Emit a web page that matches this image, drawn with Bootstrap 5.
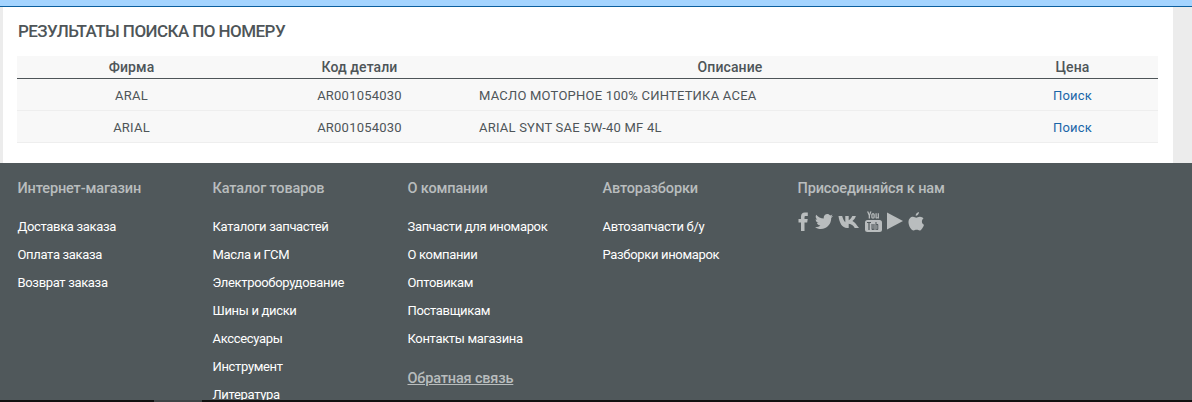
<!DOCTYPE html>
<html lang="ru"><head><meta charset="utf-8">
<link href="https://cdn.jsdelivr.net/npm/bootstrap@5.3.0/dist/css/bootstrap.min.css" rel="stylesheet">
<style>
html,body{height:402px;overflow:hidden}
body{background:#ececec;font-family:"Roboto","Liberation Sans",sans-serif;color:#4e5558;font-size:13px}
.topstrip{height:7px;background:#a4d4ff;border-bottom:1px solid #0b5f9f}
.mainpane{height:156px;margin:0 19px 0 3px;background:#fff;padding:14px 15px 0 14px}
.pagehead{font-size:17px;line-height:20px;font-weight:500;margin:0 0 15px 1px;letter-spacing:-.56px;color:#4e5558}
.restable{width:1141px;table-layout:fixed;margin:0}
.restable th,.restable td{padding:0;text-align:center;vertical-align:middle;background:#f8f8f8;box-shadow:none;color:#4e5558}
.restable th{height:22px;font-size:14px;font-weight:500;border-bottom:1px solid #4e5558;line-height:20px;padding-top:1px;letter-spacing:.1px}
.restable td{height:32px;font-size:13px;border-bottom:1px solid #eeeeee;letter-spacing:.22px;padding-top:4px}
.restable td.desc{text-align:left;padding-left:6px}
.restable a{color:#1a66a8;text-decoration:none}
.sitefoot{background:#50585b;height:239px;padding:17px 0 0 17.5px;overflow:hidden;position:relative}
.footcols{display:flex}
.footcol{width:195px;flex:none}
.foothead{font-size:14.5px;font-weight:500;line-height:18px;color:#b9bdbe;margin-bottom:20px;letter-spacing:-.14px}
.footcol ul{list-style:none;margin:0;padding:0}
.footcol li{height:28px;line-height:18px;font-size:13px;color:#fff;letter-spacing:-.33px}
.feedback{display:block;margin-top:12px;font-size:14.5px;font-weight:500;color:#b9bdbe;text-decoration:underline;line-height:18px;letter-spacing:-.16px}
.socials{display:flex;align-items:center;gap:5px;margin-top:-9px;height:24px}
.socials svg{display:block;fill:#b9bdbe;flex:none}
.socials .icon-f{margin-right:2px;margin-left:.5px}
.bottomline{position:absolute;left:0;right:0;bottom:0;height:2px;background:#111}
.bottomline::after{content:"";position:absolute;left:154px;width:48px;top:0;bottom:0;background:#3f4547}
</style></head><body>
<div class="topstrip"></div>
<div class="mainpane">
<h1 class="pagehead">РЕЗУЛЬТАТЫ ПОИСКА ПО НОМЕРУ</h1>
<table class="table restable">
<colgroup><col style="width:229px"><col style="width:227px"><col style="width:514px"><col style="width:171px"></colgroup>
<thead><tr><th>Фирма</th><th>Код детали</th><th>Описание</th><th>Цена</th></tr></thead>
<tbody>
<tr><td>ARAL</td><td>AR001054030</td><td class="desc">МАСЛО МОТОРНОЕ 100% СИНТЕТИКА ACEA</td><td><a href="#">Поиск</a></td></tr>
<tr><td>ARIAL</td><td>AR001054030</td><td class="desc">ARIAL SYNT SAE 5W-40 MF 4L</td><td><a href="#">Поиск</a></td></tr>
</tbody></table>
</div>
<footer class="sitefoot">
<div class="footcols">
<div class="footcol"><div class="foothead">Интернет-магазин</div><ul><li>Доставка заказа</li><li>Оплата заказа</li><li>Возврат заказа</li></ul></div>
<div class="footcol"><div class="foothead">Каталог товаров</div><ul><li>Каталоги запчастей</li><li>Масла и ГСМ</li><li>Электрооборудование</li><li>Шины и диски</li><li>Акссесуары</li><li>Инструмент</li><li>Литература</li></ul></div>
<div class="footcol"><div class="foothead">О компании</div><ul><li>Запчасти для иномарок</li><li>О компании</li><li>Оптовикам</li><li>Поставщикам</li><li>Контакты магазина</li></ul><a class="feedback" href="#">Обратная связь</a></div>
<div class="footcol"><div class="foothead">Авторазборки</div><ul><li>Автозапчасти б/у</li><li>Разборки иномарок</li></ul></div>
<div class="footcol"><div class="foothead">Присоединяйся к нам</div>
<div class="socials">
<svg class="icon-f" width="10" height="19" viewBox="0 0 10 19"><path d="M3 19V10.500H.5V7H3V4.500C3 1.700 4.600 .5 6.800 .5H9.800V4H7.800C6.900 4 6.500 4.400 6.500 5.200V7H9.700L9.200 10.500H6.500V19Z"/></svg>
<svg width="18" height="15" viewBox="0 0 18 15"><path d="M18 2c-.7.300-1.400.500-2.100.6.800-.5 1.300-1.200 1.600-2-.7.400-1.500.7-2.300.9C14.500.6 13.500 0 12.400 0c-2 0-3.700 1.700-3.700 3.700 0 .3 0 .6.100.9C5.700 4.400 3 2.900 1.200.7.900 1.300.700 1.900.700 2.600c0 1.300.7 2.400 1.600 3.100-.6 0-1.200-.2-1.700-.5 0 1.800 1.300 3.300 3 3.700-.6.200-1.200.2-1.700.1.500 1.500 1.800 2.500 3.500 2.600C4 12.700 2 13.400 0 13.200 1.700 14.300 3.600 15 5.700 15c6.800 0 10.500-5.600 10.500-10.500V4C16.900 3.500 17.500 2.800 18 2Z"/></svg>
<svg width="22" height="13" viewBox="0 0 21 13"><path d="M0 1H3.700C4.300 3.500 5.300 5.800 6.800 7.300V1H10.200V5.200C11.700 4.600 13 2.800 13.800 1H17.400C16.800 3.300 15.300 5 13.900 6C15.500 6.900 17.300 8.500 18.500 10.500L20.500 13H16.200C15.300 10.800 13.200 9.300 10.200 8.800V13H8.500C3.800 13 .8 8 0 1Z"/></svg>
<svg width="17" height="21" viewBox="0 0 17 21"><rect x="0" y="9" width="17" height="12" rx="2.500"/><path d="M2 .5H3.500L4.300 3.300L5.100.5H6.500L5 4.600V7.500H3.700V4.600ZM8 2.200C9.200 2.200 9.700 2.800 9.700 3.800V6C9.700 7 9.200 7.600 8 7.600S6.300 7 6.300 6V3.800C6.300 2.800 6.800 2.200 8 2.200ZM7.500 3.700V6.100C7.500 6.800 8.500 6.800 8.500 6.100V3.700C8.500 3 7.500 3 7.500 3.700ZM10.500 2.300H11.700V6.200C11.700 6.600 12.500 6.500 12.700 6V2.300H13.900V7.500H12.700V7C12 7.800 10.500 7.800 10.500 6.500Z"/><path style="fill:#50585b" d="M2 11H6V12H4.600V19H3.400V12H2ZM6.500 13H7.600V17.500C7.800 18 8.300 18 8.400 17.500V13H9.500V19H8.400V18.400C7.800 19.200 6.500 19.200 6.500 18ZM10.500 11H11.500V13.400C12.200 12.700 13.300 13 13.300 14V18C13.300 19.100 12.200 19.400 11.500 18.500V19H10.500ZM11.500 14.200V18C11.900 18.300 12.300 18.200 12.300 17.800V14.400C12.300 14 11.900 13.900 11.500 14.200Z"/></svg>
<svg width="16" height="18" viewBox="0 0 16 17"><path d="M0 0L16 8.500L0 17Z"/></svg>
<svg width="16" height="19" viewBox="0 0 16 19"><path d="M11 0C11.100 1.900 9.500 3.800 7.700 3.700C7.500 1.900 9.200.2 11 0ZM15.500 6.400C13.200 7.800 13.500 11.500 16 12.700C15.200 15 13.500 18.500 11.600 18.500C10.500 18.500 10 17.800 8.600 17.800C7.200 17.800 6.700 18.500 5.600 18.500C3.300 18.500 .5 13.800 .5 10.300C.5 6.700 2.800 4.800 5 4.800C6.300 4.800 7.500 5.700 8.300 5.700C9.100 5.700 10.400 4.600 12 4.700C13.400 4.800 14.800 5.300 15.500 6.400Z"/></svg>
</div></div>
</div>
<div class="bottomline"></div>
</footer>
</body></html>
